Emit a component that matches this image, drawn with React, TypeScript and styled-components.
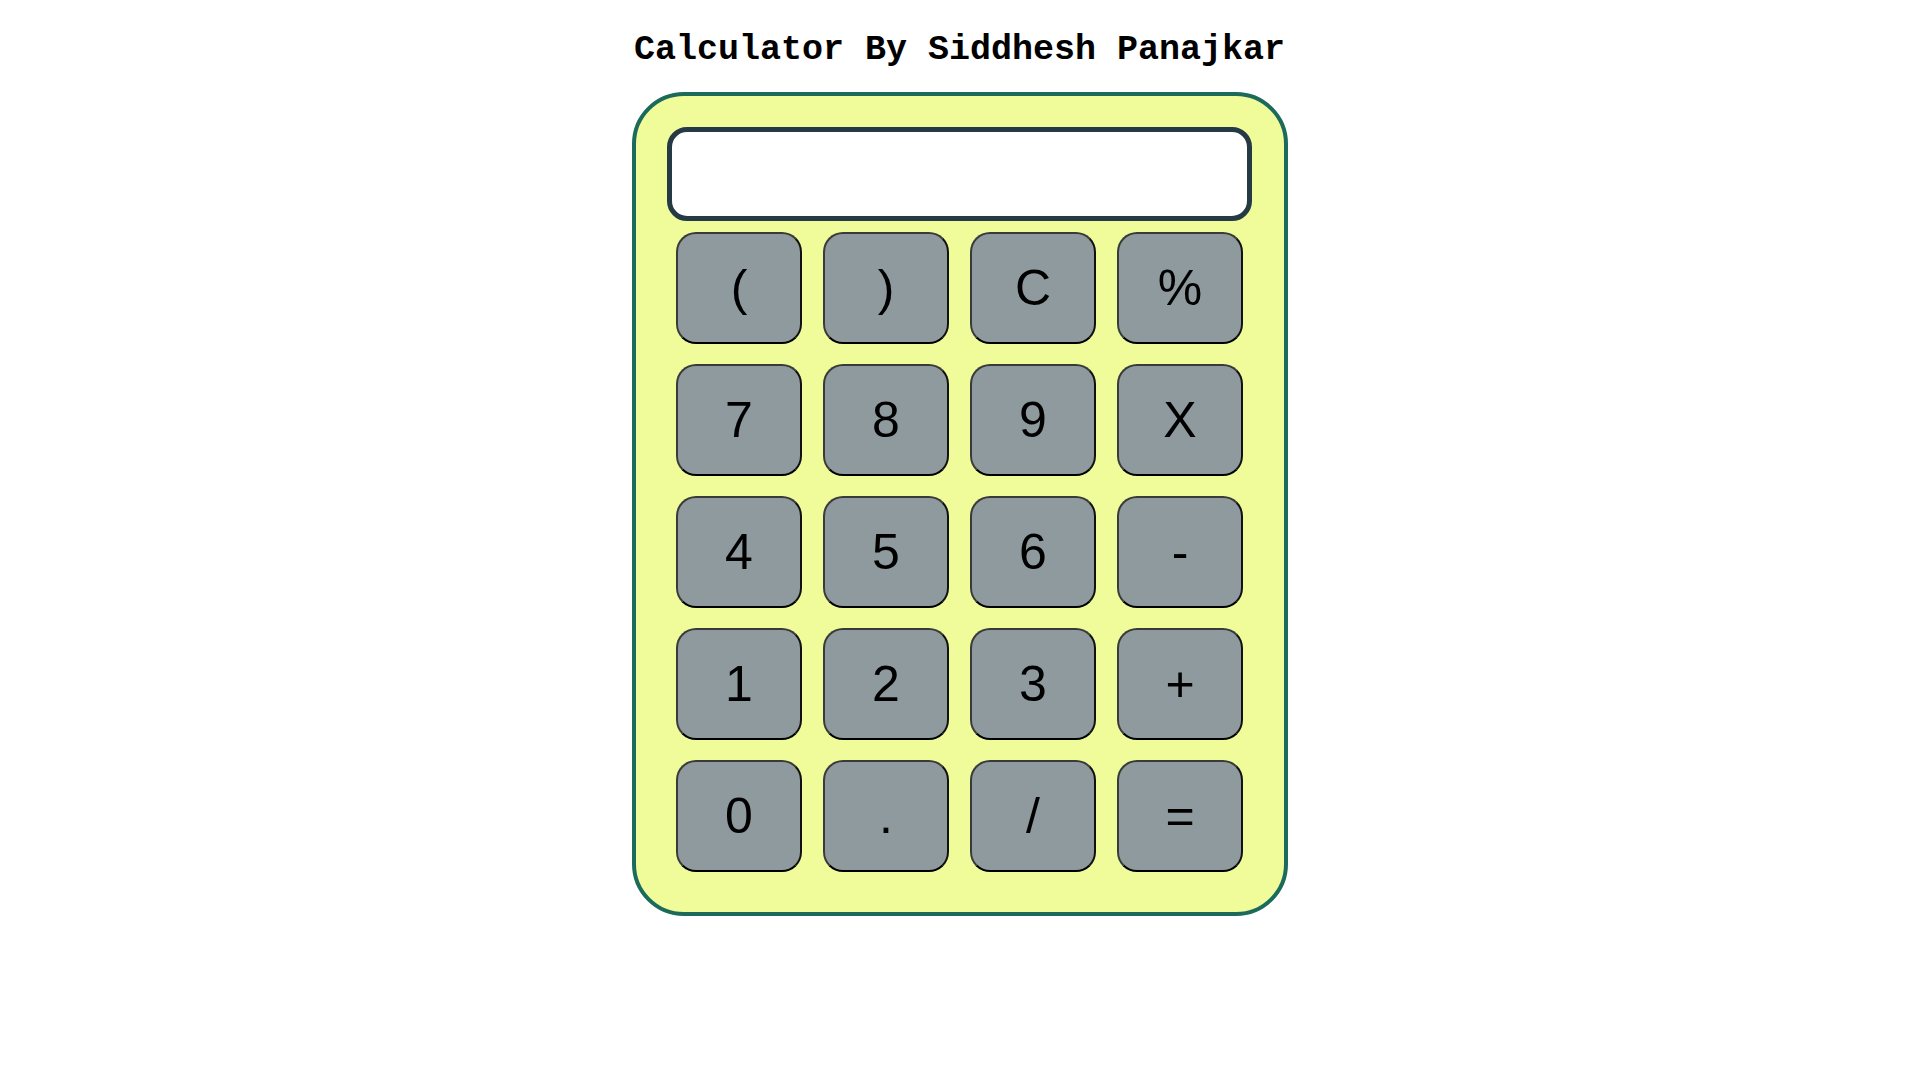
import React, { useState } from "react";
import styled, { createGlobalStyle } from "styled-components";

const GlobalStyle = createGlobalStyle`
  * {
    box-sizing: border-box;
  }
  body {
    margin: 0;
    background-color: #ffffff;
  }
`;

const Page = styled.div`
  display: flex;
  flex-direction: column;
  align-items: center;
  width: 100%;
  min-height: 100vh;
`;

const Title = styled.h1`
  margin: 30px 0 22px 0;
  font-family: "Liberation Mono", "Courier New", monospace;
  font-size: 35px;
  line-height: 40px;
  font-weight: 700;
  color: #000;
`;

const Body = styled.div`
  width: 656px;
  height: 824px;
  display: flex;
  flex-direction: column;
  align-items: center;
  padding-top: 31px;
  background-color: #f0fc99;
  border: 4px solid #1b6a5b;
  border-radius: 52px;
`;

const Screen = styled.input`
  width: 585px;
  height: 94px;
  border: 5px solid #263a46;
  border-radius: 20px;
  background-color: #ffffff;
  outline: none;
  padding: 0 20px;
  font-family: "Liberation Sans", Arial, sans-serif;
  font-size: 40px;
  text-align: right;
`;

const Keys = styled.div`
  display: grid;
  grid-template-columns: repeat(4, 126px);
  grid-auto-rows: 112px;
  column-gap: 21px;
  row-gap: 20px;
  margin-top: 11px;
`;

const Key = styled.button`
  display: flex;
  align-items: center;
  justify-content: center;
  padding: 0;
  background-color: #8e9a9e;
  border: 2px solid #3a3a3a;
  border-bottom-color: #000;
  border-right-color: #111;
  border-radius: 20px;
  font-family: "Liberation Sans", Arial, sans-serif;
  font-size: 50px;
  color: #000;
  cursor: pointer;
`;

const keys = [
  "(", ")", "C", "%",
  "7", "8", "9", "X",
  "4", "5", "6", "-",
  "1", "2", "3", "+",
  "0", ".", "/", "=",
];

function App() {
  const [value, setValue] = useState("");

  const press = (k: string) => {
    if (k === "C") {
      setValue("");
      return;
    }
    if (k === "=") {
      try {
        // eslint-disable-next-line no-new-func
        const res = Function(`return (${value.replace(/X/g, "*")})`)();
        setValue(String(res));
      } catch (e) {
        setValue("Error");
      }
      return;
    }
    setValue(value + k);
  };

  return (
    <>
      <GlobalStyle />
      <Page>
        <Title>Calculator By Siddhesh Panajkar</Title>
        <Body>
          <Screen type="text" value={value} readOnly />
          <Keys>
            {keys.map((k) => (
              <Key key={k} onClick={() => press(k)}>
                {k}
              </Key>
            ))}
          </Keys>
        </Body>
      </Page>
    </>
  );
}

export default App;
